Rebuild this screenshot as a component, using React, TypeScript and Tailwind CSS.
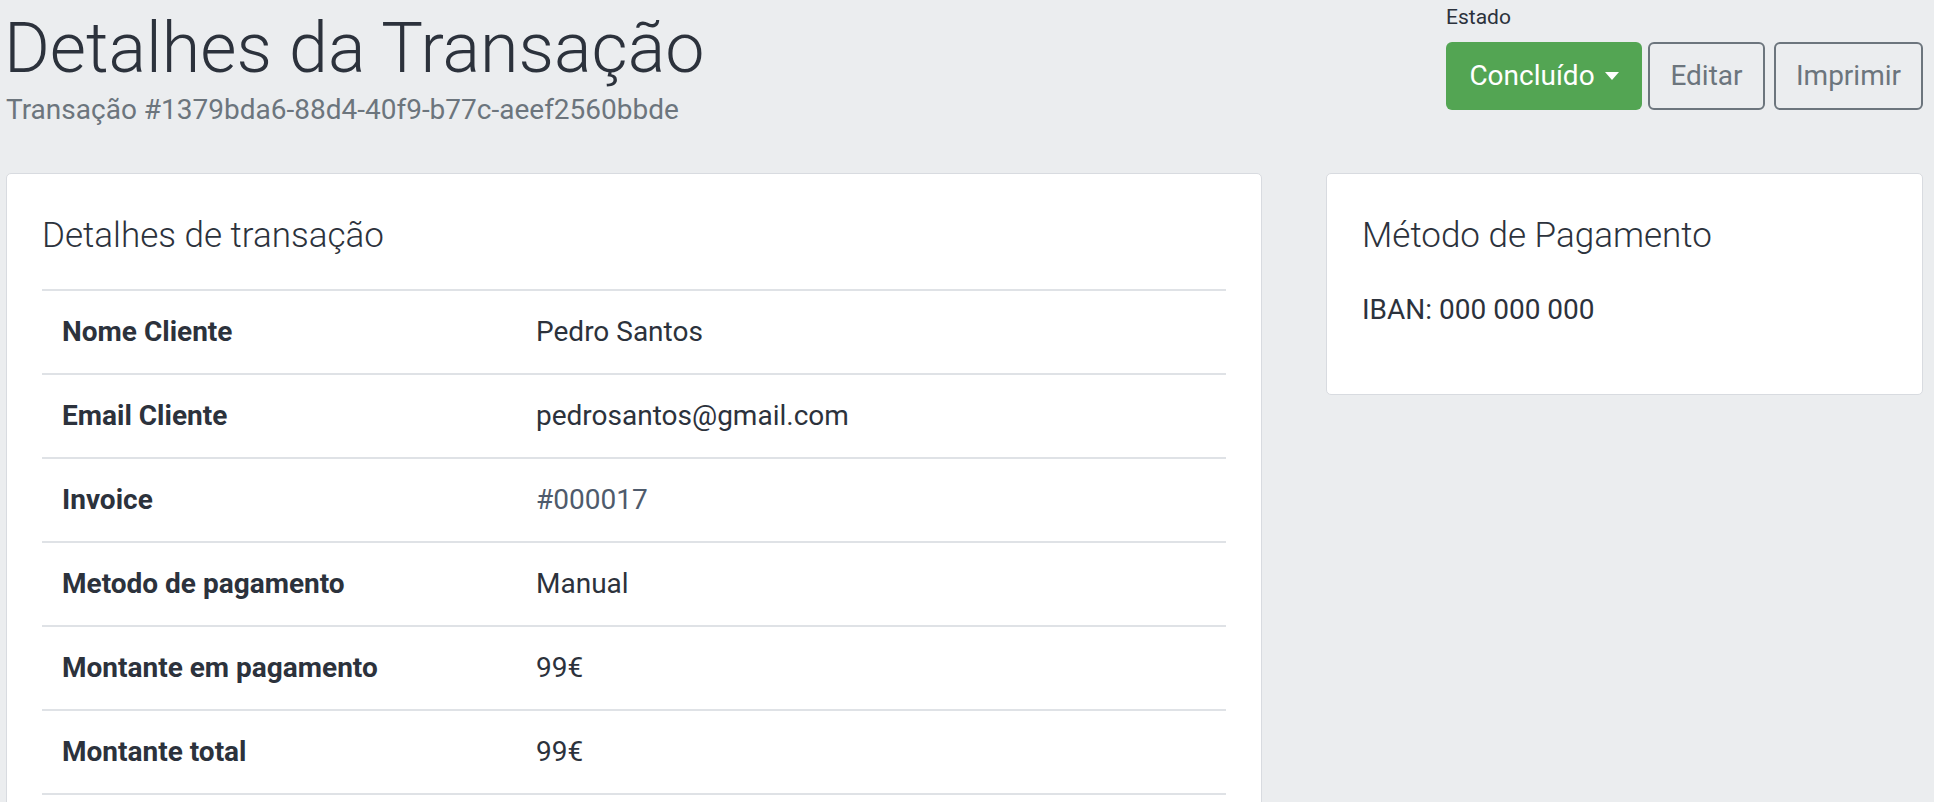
import React from "react";

const rows: { label: string; value: string; link?: boolean }[] = [
  { label: "Nome Cliente", value: "Pedro Santos" },
  { label: "Email Cliente", value: "pedrosantos@gmail.com" },
  { label: "Invoice", value: "#000017", link: true },
  { label: "Metodo de pagamento", value: "Manual" },
  { label: "Montante em pagamento", value: "99€" },
  { label: "Montante total", value: "99€" },
];

export default function App() {
  return (
    <div className="min-h-screen bg-[#ebedef] pl-[6px] pr-[11px] font-['Roboto',sans-serif] text-[#2c323c]">
      <div className="flex items-start justify-between">
        <div className="pt-[6px]">
          <h1 className="-ml-[2px] text-[70px] font-light leading-[84px]">Detalhes da Transação</h1>
          <p className="text-[28px] leading-[40px] text-[#6c757d]">
            Transação #1379bda6-88d4-40f9-b77c-aeef2560bbde
          </p>
        </div>
        <div className="flex flex-col items-start pt-[4px]">
          <span className="text-[21px] leading-[27px]">Estado</span>
          <div className="mt-[11px] flex">
            <button className="flex h-[68px] w-[196px] items-center justify-center rounded-[6px] bg-[#53a553] text-[28px] text-white">
              <span>Concluído</span>
              <span className="ml-[10px] h-0 w-0 border-x-[7px] border-t-[8px] border-x-transparent border-t-white" />
            </button>
            <button className="ml-[6px] flex h-[68px] w-[117px] items-center justify-center rounded-[6px] border-2 border-[#6c757d] text-[28px] text-[#6c757d]">
              Editar
            </button>
            <button className="ml-[9px] flex h-[68px] w-[149px] items-center justify-center rounded-[6px] border-2 border-[#6c757d] text-[28px] text-[#6c757d]">
              Imprimir
            </button>
          </div>
        </div>
      </div>

      <div className="mt-[43px] flex items-start gap-[64px]">
        <div className="w-[1256px] rounded-[5px] border border-[#d8dbe0] bg-white px-[35px] pt-[41px] pb-[35px]">
          <h5 className="mb-[32px] text-[35px] font-light leading-[42px]">Detalhes de transação</h5>
          <div className="border-b-2 border-[#dfe2e6]">
            {rows.map((r) => (
              <div key={r.label} className="grid grid-cols-[474px_1fr] border-t-2 border-[#dfe2e6] text-[28px] leading-[40px]">
                <div className="px-[20px] py-[21px] font-bold">{r.label}</div>
                <div className={"px-[20px] py-[21px] " + (r.link ? "text-[#4f5b6c]" : "")}>{r.value}</div>
              </div>
            ))}
          </div>
        </div>

        <div className="flex-1 rounded-[5px] border border-[#d8dbe0] bg-white px-[35px] pt-[41px] pb-[64px]">
          <h5 className="text-[35px] font-light leading-[42px]">Método de Pagamento</h5>
          <p className="mt-[33px] text-[28px] leading-[40px]">IBAN: 000 000 000</p>
        </div>
      </div>
    </div>
  );
}
